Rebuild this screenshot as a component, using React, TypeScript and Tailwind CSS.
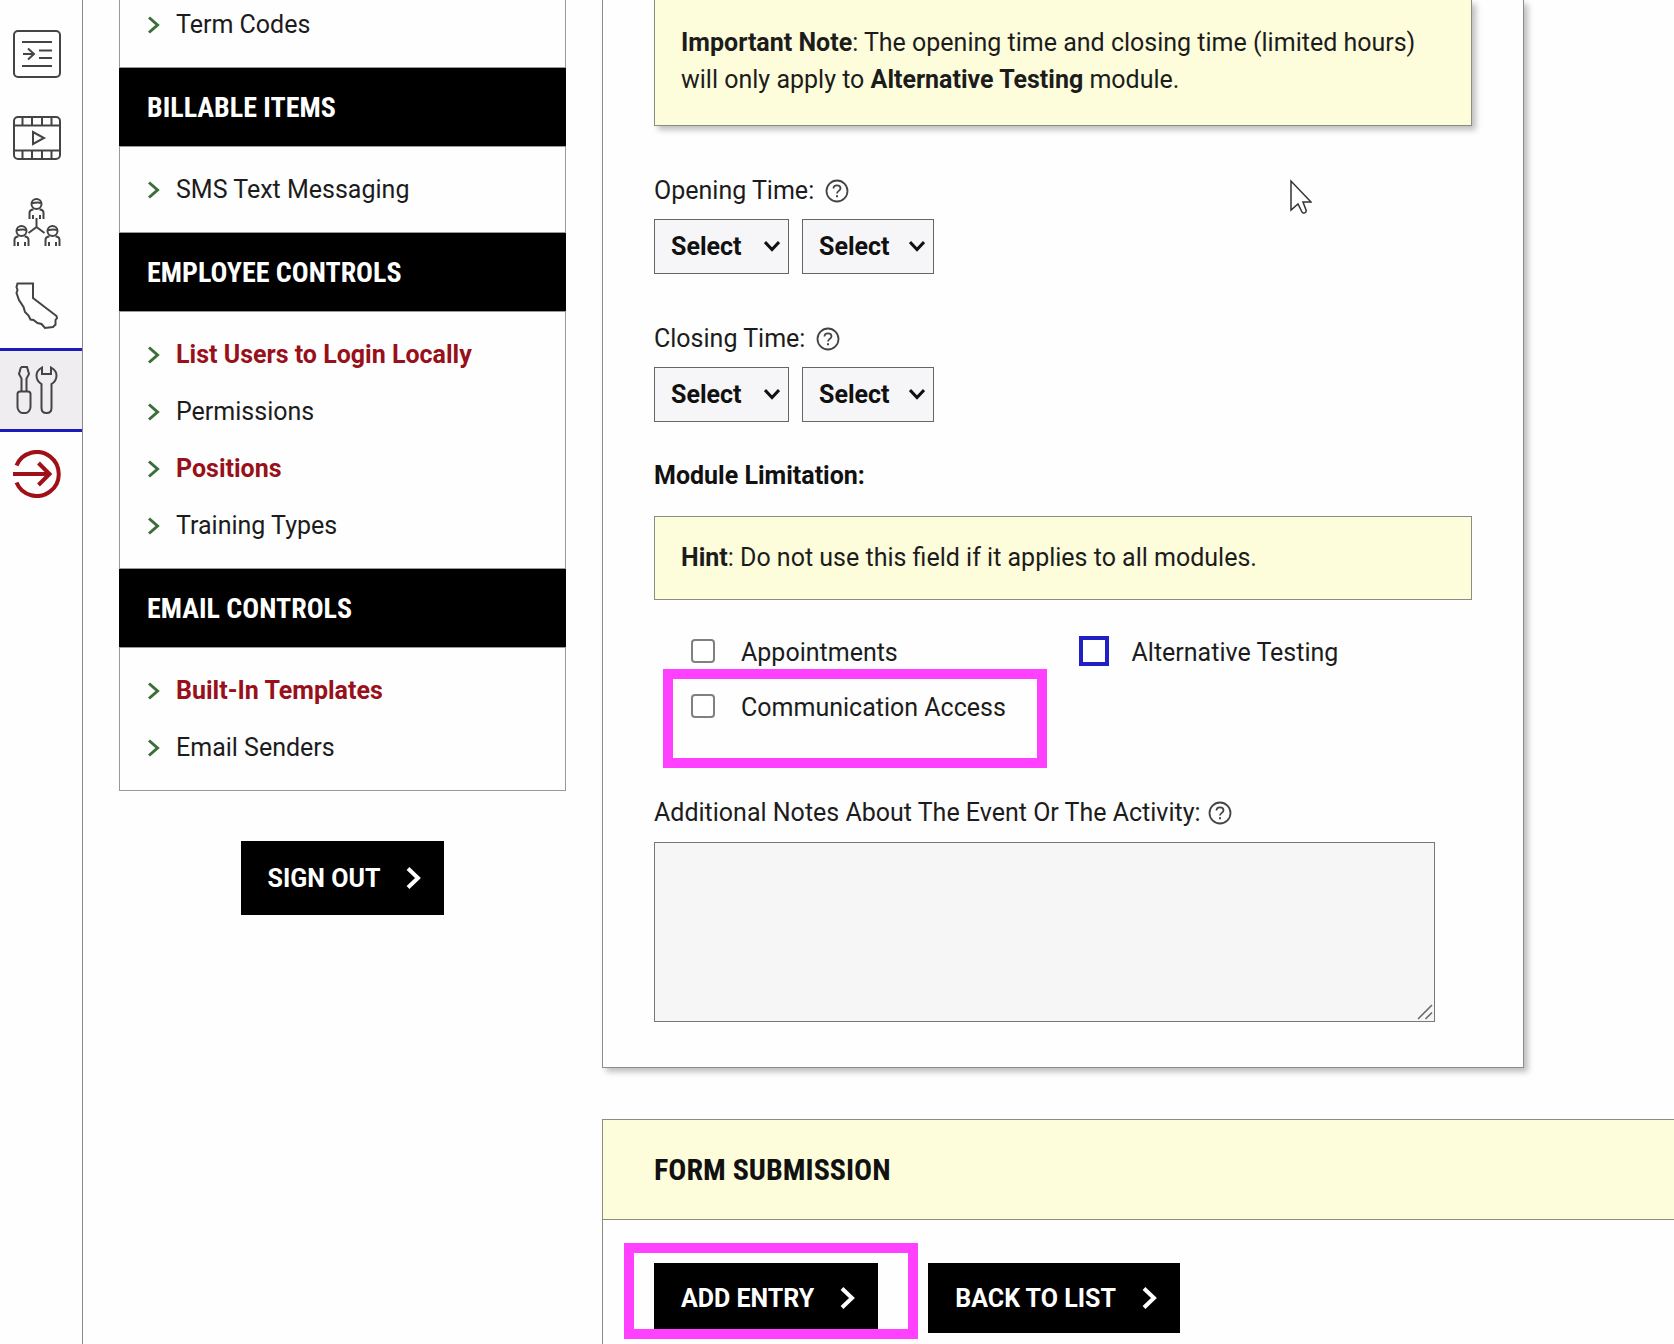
import type { ReactNode } from "react";

type NavItem = { label: string; highlighted?: boolean };
type NavSection = { title?: string; items: NavItem[] };

const sections: NavSection[] = [
  { items: [{ label: "Term Codes" }] },
  { title: "BILLABLE ITEMS", items: [{ label: "SMS Text Messaging" }] },
  {
    title: "EMPLOYEE CONTROLS",
    items: [
      { label: "List Users to Login Locally", highlighted: true },
      { label: "Permissions" },
      { label: "Positions", highlighted: true },
      { label: "Training Types" },
    ],
  },
  {
    title: "EMAIL CONTROLS",
    items: [
      { label: "Built-In Templates", highlighted: true },
      { label: "Email Senders" },
    ],
  },
];

function LineIcon({ children }: { children: ReactNode }) {
  return (
    <svg
      viewBox="0 0 48 48"
      className="h-12 w-12"
      fill="none"
      stroke="currentColor"
      strokeWidth="2"
      aria-hidden="true"
    >
      {children}
    </svg>
  );
}

function ListIcon() {
  return (
    <LineIcon>
      <rect x="1" y="1" width="46" height="46" rx="4" />
      <path d="M9 12h30M26 20.500h13M26 28h13M9 36h30M10 24h11M15 18.500l6 5.500-6 5.500" />
    </LineIcon>
  );
}

function FilmIcon() {
  return (
    <LineIcon>
      <rect x="1" y="3" width="46" height="42" rx="4" />
      <path d="M1 11.500h46M1 36.500h46M9.500 3v8.500M19 3v8.500M29 3v8.500M38.500 3v8.500M9.500 36.500V45M19 36.500V45M29 36.500V45M38.500 36.500V45" />
      <path d="M20 18v12l11-6z" />
    </LineIcon>
  );
}

function Person({ x, y }: { x: number; y: number }) {
  return (
    <g transform={`translate(${x} ${y})`}>
      <circle cx="7.500" cy="6" r="5" />
      <path d="M3 5c3 0 6-1 9 0M.5 21v-6c0-2.500 1-3.500 4-3.500M14.500 21v-6c0-2.500-1-3.500-4-3.500M4 21v-4M11 21v-4" />
    </g>
  );
}

function PeopleIcon() {
  return (
    <LineIcon>
      <Person x={16} y={0} />
      <Person x={1} y={27} />
      <Person x={32} y={27} />
      <path d="M23.500 20v9l-8 6M23.500 29l8 6" />
    </LineIcon>
  );
}

function StateIcon() {
  return (
    <LineIcon>
      <path d="M4.500 1.500H20V16l23.500 18 .5 2-1.500 2v4.500L40 45l-8 1-3.500-4-4-1-4-3-3-.500-2-4-3.500-3.500-1.500-5L6 18l-2.500-7 1-3-1-3z" />
    </LineIcon>
  );
}

function ToolsIcon() {
  return (
    <LineIcon>
      <path d="M8 1h6l2 7-2.500 4.500V25.500M8.500 25.500V12.500L6 8l2-7M4.500 28c0-1.500 1-2.500 2.500-2.500h8c1.500 0 2.500 1 2.500 2.500V41c0 3-2.500 6-5 6h-3c-2.500 0-5-3-5-6z" />
      <path d="M29 1.500c-3.500 2-5.500 4.500-5.500 8 0 3.500 1.500 6.500 5 8.500V42c0 3 2 5 5 5s5-2 5-5V18c3.500-2 5-5 5-8.500 0-3.500-2-6-5.500-8V8h-9z" />
    </LineIcon>
  );
}

function ExitIcon() {
  return (
    <svg
      viewBox="0 0 48 48"
      className="h-12 w-12 text-[#a01018]"
      fill="none"
      stroke="currentColor"
      strokeWidth="4"
      aria-hidden="true"
    >
      <path d="M3.500 15.500a22 22 0 1 1 0 17M0 24h36M25.500 13l11 11-11 11" />
    </svg>
  );
}

const railItems = [
  { label: "Lists", icon: <ListIcon /> },
  { label: "Videos", icon: <FilmIcon /> },
  { label: "Staff", icon: <PeopleIcon /> },
  { label: "State", icon: <StateIcon /> },
  { label: "Tools", icon: <ToolsIcon />, active: true },
  { label: "Exit", icon: <ExitIcon /> },
];

function IconRail() {
  return (
    <nav aria-label="Main" className="w-[83px] shrink-0 border-r border-[#8a8a8a] pt-3">
      {railItems.map((item) => (
        <a
          key={item.label}
          href="#"
          aria-label={item.label}
          className={
            item.active
              ? "flex h-[84px] items-center border-y-[3px] border-[#1c1cb8] bg-[#efedf0] pl-[13px] text-[#444]"
              : "flex h-[84px] items-center pl-[13px] text-[#444]"
          }
        >
          {item.icon}
        </a>
      ))}
    </nav>
  );
}

function Sidebar() {
  return (
    <aside className="w-[447px] shrink-0">
      <nav aria-label="Controls" className="-mt-[19px]">
        {sections.map((section) => (
          <section key={section.title ?? "codes"}>
            {section.title && (
              <h2 className="flex h-[78px] items-center bg-black pl-7 font-['Roboto_Condensed','Roboto',sans-serif] text-[28px] font-bold text-white">
                {section.title}
              </h2>
            )}
            <ul className="border border-[#999] py-[14px]">
              {section.items.map((item) => (
                <li key={item.label}>
                  <a
                    href="#"
                    className={
                      item.highlighted
                        ? "flex h-[57px] items-center gap-4 pl-[27px] font-bold text-[#98101a]"
                        : "flex h-[57px] items-center gap-4 pl-[27px]"
                    }
                  >
                    <svg
                      viewBox="0 0 13 18"
                      className="h-[18px] w-[13px]"
                      fill="none"
                      stroke="#3c6e3a"
                      strokeWidth="3"
                      aria-hidden="true"
                    >
                      <path d="M2 1.500l8.500 7.500L2 16.500" />
                    </svg>
                    {item.label}
                  </a>
                </li>
              ))}
            </ul>
          </section>
        ))}
      </nav>
      <div className="mt-[50px] flex justify-center">
        <ArrowButton tall>SIGN OUT</ArrowButton>
      </div>
    </aside>
  );
}

function ArrowButton({ children, tall }: { children: ReactNode; tall?: boolean }) {
  return (
    <button
      type="button"
      className={
        tall
          ? "flex h-[74px] items-center gap-[26px] bg-black pr-[23px] pl-[27px] font-bold text-white"
          : "flex h-[70px] items-center gap-[26px] bg-black pr-[23px] pl-[27px] font-bold text-white"
      }
    >
      {children}
      <svg
        viewBox="0 0 15 24"
        className="h-6 w-[15px]"
        fill="none"
        stroke="currentColor"
        strokeWidth="4"
        aria-hidden="true"
      >
        <path d="M2 2.500l10 9.500L2 21.500" />
      </svg>
    </button>
  );
}

function HelpButton() {
  return (
    <button type="button" aria-label="Help">
      <svg viewBox="0 0 24 24" className="h-6 w-6" fill="none" stroke="#444" aria-hidden="true">
        <circle cx="12" cy="12" r="10.500" strokeWidth="1.800" />
        <path d="M8.500 9.500c0-2 1.500-3.200 3.500-3.200s3.500 1.200 3.500 3c0 2.500-3.500 2.700-3.500 5.200" strokeWidth="1.800" />
        <path d="M12 16.300v2" strokeWidth="2" />
      </svg>
    </button>
  );
}

function TimeSelect({ label, wide }: { label: string; wide?: boolean }) {
  return (
    <div className="relative">
      <select
        aria-label={label}
        className={
          wide
            ? "h-[55px] w-[135px] appearance-none border border-[#666] bg-[#f6f5f7] pl-4 font-bold text-[#111]"
            : "h-[55px] w-[132px] appearance-none border border-[#666] bg-[#f6f5f7] pl-4 font-bold text-[#111]"
        }
      >
        <option>Select</option>
      </select>
      <svg
        viewBox="0 0 16 12"
        className="pointer-events-none absolute top-[21px] right-[9px] h-3 w-4"
        fill="none"
        stroke="#111"
        strokeWidth="3"
        aria-hidden="true"
      >
        <path d="M1 2l7 7.500L15 2" />
      </svg>
    </div>
  );
}

function TimeField({ label }: { label: string }) {
  return (
    <fieldset>
      <legend className="flex items-center gap-[11px]">
        {label}:
        <HelpButton />
      </legend>
      <div className="mt-[10px] flex gap-[13px]">
        <TimeSelect label={`${label} hour`} wide />
        <TimeSelect label={`${label} period`} />
      </div>
    </fieldset>
  );
}

function ModuleOption({ label, focused }: { label: string; focused?: boolean }) {
  return (
    <label className="flex items-center gap-[26px]">
      <input
        type="checkbox"
        className={
          focused
            ? "mb-[3px] h-6 w-6 appearance-none bg-white outline-4 -outline-offset-1 outline-[#2020c4]"
            : "mb-[3px] h-6 w-6 appearance-none rounded-[4px] border-2 border-[#808080] bg-white"
        }
      />
      {label}
    </label>
  );
}

function EventForm() {
  return (
    <section className="relative mr-[150px] border border-t-0 border-[#8c8c8c] px-[51px] pb-[45px] shadow-[4px_4px_6px_rgba(0,0,0,0.25)]">
      <p className="border border-t-0 border-[#8c8c80] bg-[#fdfddb] px-[26px] pt-6 pb-[27px] shadow-[4px_4px_6px_rgba(0,0,0,0.25)]">
        <strong>Important Note</strong>: The opening time and closing time (limited hours)
        will only apply to <strong>Alternative Testing</strong> module.
      </p>

      <div className="mt-[46px] flex flex-col gap-[46px]">
        <TimeField label="Opening Time" />
        <TimeField label="Closing Time" />
      </div>

      <h3 className="mt-[35px] font-bold text-[#111]">Module Limitation:</h3>
      <p className="mt-[22px] border border-[#8c8c80] bg-[#fdfddb] px-[26px] pt-[22px] pb-[23px]">
        <strong>Hint</strong>: Do not use this field if it applies to all modules.
      </p>

      <div className="mt-[34px] grid grid-cols-2 gap-y-[18px] pl-[37px]">
        <ModuleOption label="Appointments" />
        <ModuleOption label="Alternative Testing" focused />
        <div className="relative">
          <ModuleOption label="Communication Access" />
          <div className="pointer-events-none absolute -top-5 -left-7 h-[99px] w-[384px] border-[10px] border-[#ff40ff]" />
        </div>
      </div>

      <div className="mt-[68px] flex items-center gap-[7px]">
        <label htmlFor="notes">Additional Notes About The Event Or The Activity:</label>
        <HelpButton />
      </div>
      <div className="relative mt-[11px] mr-[37px]">
        <textarea
          id="notes"
          className="block h-[180px] w-full resize-none border border-[#777] bg-[#f6f6f6]"
        />
        <svg
          viewBox="0 0 16 16"
          className="pointer-events-none absolute right-[2px] bottom-[2px] h-4 w-4"
          fill="none"
          stroke="#666"
          strokeWidth="1.500"
          aria-hidden="true"
        >
          <path d="M1 15L15 1M8.500 15L15 8.500" />
        </svg>
      </div>

      {/* mouse pointer */}
      <svg
        viewBox="0 0 22 35"
        className="pointer-events-none absolute top-[179px] right-[211px] h-[35px] w-[22px]"
        fill="#fff"
        stroke="#333"
        strokeWidth="1.500"
        aria-hidden="true"
      >
        <path d="M1 2v29l7-6 4 8c1 2 5 1 4-2l-3-8h8z" />
      </svg>
    </section>
  );
}

function FormSubmission() {
  return (
    <section className="mt-[51px] border-t border-l border-[#8c8c80]">
      <h2 className="flex h-[100px] items-center border-b border-[#8c8c80] bg-[#fdfddb] pl-[51px] font-['Roboto_Condensed','Roboto',sans-serif] text-[30px] font-bold text-[#111]">
        FORM SUBMISSION
      </h2>
      <div className="flex gap-[50px] pt-[43px] pb-[50px] pl-[51px]">
        <div className="relative">
          <ArrowButton>ADD ENTRY</ArrowButton>
          <div className="pointer-events-none absolute -top-5 -left-[30px] h-24 w-[294px] border-[10px] border-[#ff40ff]" />
        </div>
        <ArrowButton>BACK TO LIST</ArrowButton>
      </div>
    </section>
  );
}

export default function App() {
  return (
    <div className="flex h-screen gap-9 overflow-hidden bg-[#fefefe] font-['Roboto',sans-serif] text-[25px] leading-[37px] text-[#1c1c1c]">
      <IconRail />
      <Sidebar />
      <main className="min-w-0 flex-1">
        <EventForm />
        <FormSubmission />
      </main>
    </div>
  );
}
